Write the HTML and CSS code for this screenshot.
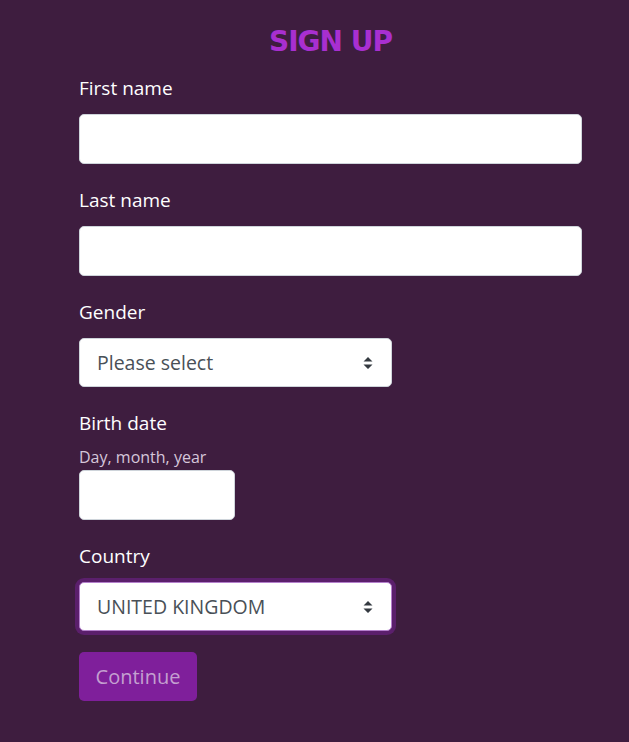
FILE: index.html
```html
<!DOCTYPE html>
<html lang="en">
<head>
<meta charset="utf-8">
<title>Sign up</title>
<link rel="stylesheet" href="styles.css">
</head>
<body>
<main class="page">
  <h1 class="title">SIGN UP</h1>
  <form class="form">
    <div class="field">
      <label class="label" for="fn">First name</label>
      <input class="input input-full" id="fn" type="text">
    </div>
    <div class="field">
      <label class="label" for="ln">Last name</label>
      <input class="input input-full" id="ln" type="text">
    </div>
    <div class="field">
      <label class="label" for="gd">Gender</label>
      <div class="select input-mid" id="gd">
        <span class="select-text">Please select</span>
        <svg class="arrows" width="10" height="14" viewBox="0 0 10 14"><path d="M5 1 L9.5 5.5 H0.5 Z M5 13 L9.5 8.5 H0.5 Z" fill="#343a40"/></svg>
      </div>
    </div>
    <div class="field">
      <label class="label label-tight" for="bd">Birth date</label>
      <div class="hint">Day, month, year</div>
      <input class="input input-small" id="bd" type="text">
    </div>
    <div class="field">
      <label class="label" for="ct">Country</label>
      <div class="select input-mid focused" id="ct">
        <span class="select-text">UNITED KINGDOM</span>
        <svg class="arrows" width="10" height="14" viewBox="0 0 10 14"><path d="M5 1 L9.5 5.5 H0.5 Z M5 13 L9.5 8.5 H0.5 Z" fill="#343a40"/></svg>
      </div>
    </div>
    <div class="actions">
      <button class="btn" type="button">Continue</button>
    </div>
  </form>
</main>
</body>
</html>
```

FILE: styles.css
```css
html, body {
  margin: 0;
  padding: 0;
  background: #3e1d3f;
}
body {
  font-family: "Open Sans", "Noto Sans", sans-serif;
  color: #ffffff;
}
.page {
  width: 503px;
  margin: 0 auto;
  padding: 0 47px 0 79px;
  box-sizing: content-box;
}
.title {
  margin: 0;
  padding-top: 24px;
  height: 36px;
  line-height: 36px;
  text-align: center;
  font-family: "DejaVu Sans", sans-serif;
  font-weight: bold;
  font-size: 28px;
  color: #a82fd0;
  letter-spacing: -1px;
}
.form {
  display: flex;
  flex-direction: column;
  margin-top: 13px;
}
.field {
  display: flex;
  flex-direction: column;
  align-items: flex-start;
  margin-bottom: 21px;
}
.label {
  display: block;
  font-size: 19px;
  line-height: 30px;
  height: 30px;
  margin-bottom: 11px;
  color: #ffffff;
}
.label-tight {
  margin-bottom: 8px;
}
.hint {
  font-size: 16px;
  line-height: 22px;
  color: #d5c6da;
  margin-bottom: 2px;
}
.input {
  box-sizing: border-box;
  height: 50px;
  border: 1px solid #ced4da;
  border-radius: 5px;
  background: #ffffff;
  font-size: 19px;
  padding: 0 16px;
  margin: 0;
}
.input-full { width: 503px; }
.input-mid { width: 313px; }
.input-small { width: 156px; }
.select {
  box-sizing: border-box;
  height: 49px;
  border: 1px solid #ced4da;
  border-radius: 5px;
  background: #ffffff;
  display: flex;
  align-items: center;
  justify-content: space-between;
  padding: 0 18px 0 17px;
}
.select-text {
  font-size: 19.5px;
  color: #495057;
}
.arrows { display: block; }
.focused {
  border-color: #b47fcc;
  box-shadow: 0 0 0 4px #5b1f6c;
}
.actions {
  display: flex;
}
.btn {
  width: 118px;
  height: 49px;
  border: none;
  border-radius: 5px;
  background: #7f1f9b;
  color: #c4a0d0;
  font-family: "Open Sans", "Noto Sans", sans-serif;
  font-size: 20px;
  padding: 0;
}
```
